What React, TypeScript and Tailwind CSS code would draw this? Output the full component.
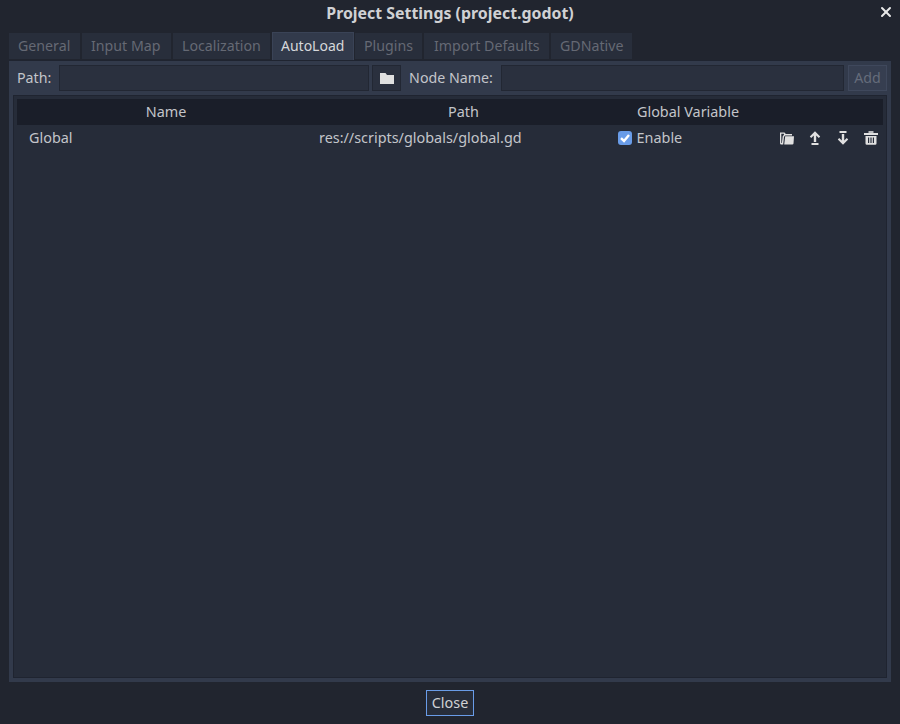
import { X } from 'lucide-react';

const tabs = [
  { name: 'General', width: 'w-[71px]', pad: 'pl-[9px]' },
  { name: 'Input Map', width: 'w-[89px]', pad: 'pl-[9px]' },
  { name: 'Localization', width: 'w-[97px]', pad: 'pl-[9px]' },
  { name: 'AutoLoad', width: 'w-[82px]', pad: 'pl-[8px]' },
  { name: 'Plugins', width: 'w-[67px]', pad: 'pl-[9px]' },
  { name: 'Import Defaults', width: 'w-[125px]', pad: 'pl-[10px]' },
  { name: 'GDNative', width: 'w-[81px]', pad: 'pl-[9px]' },
];

function FolderIcon() {
  return (
    <svg width="14" height="14" viewBox="0 0 14 14">
      <path d="M0 2h5.5l1.5 2h7v9H0z" fill="#e0e0e0" />
    </svg>
  );
}

function OpenFolderIcon() {
  return (
    <svg width="16" height="16" viewBox="0 0 16 16" fill="#e0e0e0">
      <path d="M1 2.5h4.5l1.3 1.6H13v1.4H6.2L5 6.8 4.2 14.5H2.2A1.2 1.2 0 0 1 1 13.3zM2.3 3.8v9.2h.6l.8-6.8L5 4.8 4.9 3.8z" fillRule="evenodd" />
      <path d="M6.2 6.2H15l-.5 7.2a1.2 1.2 0 0 1-1.2 1.1H5.2z" />
    </svg>
  );
}

function MoveUpIcon() {
  return (
    <svg width="16" height="16" viewBox="0 0 16 16" fill="#e0e0e0">
      <path d="M8 1.2 13.2 6.6 11.8 8 9.2 5.6V12H6.8V5.6L4.2 8 2.8 6.6z" />
      <rect x="4.5" y="13" width="7" height="2" />
    </svg>
  );
}

function MoveDownIcon() {
  return (
    <svg width="16" height="16" viewBox="0 0 16 16" fill="#e0e0e0">
      <rect x="4.5" y="1" width="7" height="2" />
      <path d="M6.8 4h2.4v6.4L11.8 8l1.4 1.4L8 14.8 2.8 9.4 4.2 8l2.6 2.4z" />
    </svg>
  );
}

function TrashIcon() {
  return (
    <svg width="16" height="16" viewBox="0 0 16 16" fill="#e0e0e0">
      <rect x="5.5" y="1.2" width="5" height="1.6" />
      <rect x="1" y="3" width="14" height="2" />
      <path d="M2.5 6h11v7.5a1.3 1.3 0 0 1-1.3 1.3H3.8a1.3 1.3 0 0 1-1.3-1.3zM5 7.5v5.5h1.2V7.5zm2.4 0v5.5h1.2V7.5zm2.4 0v5.5H11V7.5z" fillRule="evenodd" />
    </svg>
  );
}

export default function App() {
  return (
    <div className="w-[900px] h-[724px] bg-[#21252f] flex flex-col text-[14.4px] leading-5 text-[#c3c5ca] font-['Noto_Sans',sans-serif] overflow-hidden">
      <div className="relative h-[27px] pt-[3px] flex justify-center text-[15.9px] leading-5 font-bold text-[#d0d1d4]">
        Project Settings (project.godot)
        <button className="absolute right-[6px] top-[4px] text-[#e8e8e8]">
          <X size={16} strokeWidth={3} />
        </button>
      </div>

      <div className="flex gap-[1px] h-[28px] mt-[5px] ml-[9px] text-[14.2px]">
        {tabs.map((tab) =>
          tab.name === 'AutoLoad' ? (
            <div key={tab.name} className={`${tab.width} ${tab.pad} pt-[3px] bg-[#323a4b] border-t border-x border-[#3a4356] text-[#d6d7da] text-[14px]`}>
              {tab.name}
            </div>
          ) : (
            <div key={tab.name} className={`${tab.width} ${tab.pad} mt-[1px] mb-[1px] pt-[3px] bg-[#282e3b] text-[#656974] mr-[1px]`}>
              {tab.name}
            </div>
          ),
        )}
      </div>

      <div className="mx-[9px] h-[622px] bg-[#323a4b] border-t border-[#1f2430] px-[4px] pt-[4px] pb-[4px] flex flex-col">
        <div className="flex items-center h-[26px] mb-[4px] pl-[4px] text-[14.2px]">
          <span className="w-[42px]">Path:</span>
          <div className="w-[311px] h-[26px] bg-[#2a303e] border border-[#222733]" />
          <button className="ml-[3px] w-[29px] h-[26px] bg-[#2a303e] border border-[#222733] flex items-center justify-center">
            <FolderIcon />
          </button>
          <span className="ml-[8px] w-[92px]">Node Name:</span>
          <div className="w-[344px] h-[26px] bg-[#2a303e] border border-[#222733]" />
          <button className="ml-[4px] w-[39px] h-[26px] bg-[#363e50] border border-[#3f485c] text-[#656c7b]">Add</button>
        </div>

        <div className="flex-1 bg-[#262c39] border border-[#1f2430] p-[3px]">
          <div className="h-[26px] bg-[#1a1e29] flex items-center">
            <span className="w-[298px] text-center">Name</span>
            <span className="w-[297px] text-center">Path</span>
            <span className="w-[152px] text-center">Global Variable</span>
          </div>
          <div className="h-[26px] flex items-center relative">
            <span className="ml-[12px] w-[290px]">Global</span>
            <span>res://scripts/globals/global.gd</span>
            <span className="ml-[96px] w-[14px] h-[14px] rounded-[3px] bg-[#699ce8] flex items-center justify-center">
              <svg width="12" height="12" viewBox="0 0 12 12" fill="none" stroke="#ffffff" strokeWidth="2.4">
                <path d="M2 6.2 5 9l5-6" />
              </svg>
            </span>
            <span className="ml-[5px]">Enable</span>
            <div className="ml-auto flex gap-[12px] mr-[4px]">
              <OpenFolderIcon />
              <MoveUpIcon />
              <MoveDownIcon />
              <TrashIcon />
            </div>
          </div>
        </div>
      </div>

      <div className="flex justify-center mt-[8px]">
        <button className="w-[48px] h-[26px] bg-[#272d3a] border border-[#699ce8] text-[#d0d1d4]">Close</button>
      </div>
    </div>
  );
}
